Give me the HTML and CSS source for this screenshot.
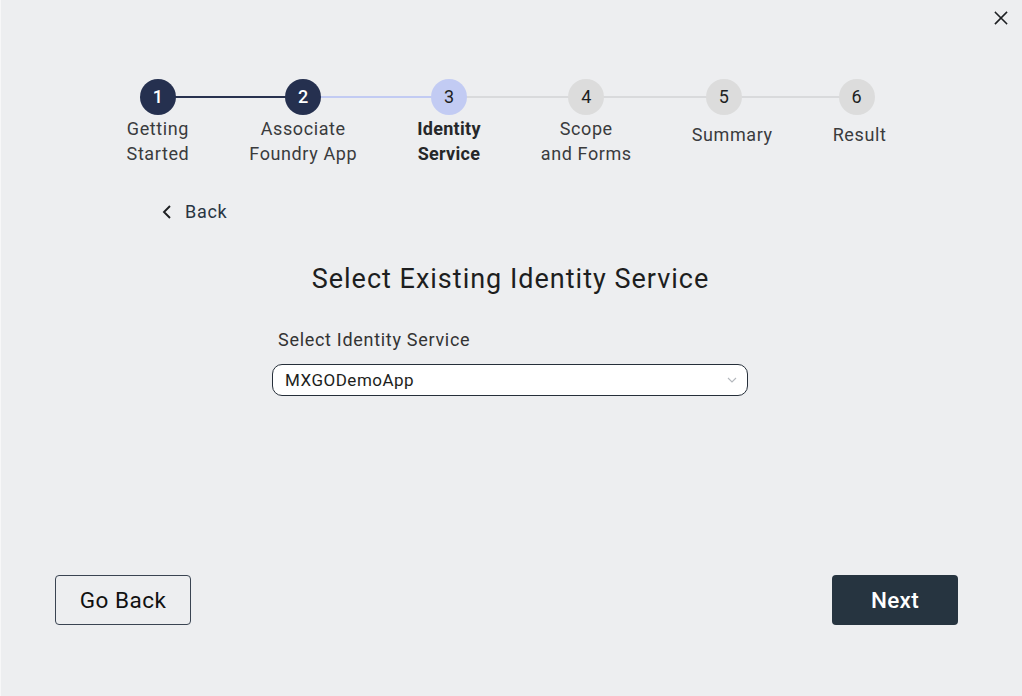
FILE: index.html
```html
<!DOCTYPE html>
<html lang="en">
<head>
<meta charset="utf-8">
<title>Select Existing Identity Service</title>
<link rel="stylesheet" href="styles.css">
</head>
<body>
<div class="page">
  <button class="close" aria-label="Close">
    <svg width="14" height="14" viewBox="0 0 14 14"><path d="M1.5 1.5 L12.5 12.5 M12.5 1.5 L1.5 12.5" stroke="#1d1f22" stroke-width="1.6" fill="none" stroke-linecap="square"/></svg>
  </button>

  <ol class="stepper">
    <li class="step done l-none r-dark">
      <span class="dot">1</span>
      <span class="label">Getting<br>Started</span>
    </li>
    <li class="step done l-dark r-blue">
      <span class="dot">2</span>
      <span class="label">Associate<br>Foundry App</span>
    </li>
    <li class="step current l-blue r-gray">
      <span class="dot">3</span>
      <span class="label">Identity<br>Service</span>
    </li>
    <li class="step todo l-gray r-gray">
      <span class="dot">4</span>
      <span class="label">Scope<br>and Forms</span>
    </li>
    <li class="step todo l-gray r-gray">
      <span class="dot shift-lg">5</span>
      <span class="label single">Summary</span>
    </li>
    <li class="step todo l-gray r-none">
      <span class="dot shift-sm">6</span>
      <span class="label single">Result</span>
    </li>
  </ol>

  <div class="back-row">
    <a class="back" href="#">
      <svg width="12" height="16" viewBox="0 0 12 16"><path d="M9 2 L3 8 L9 14" stroke="#1d1f22" stroke-width="1.9" fill="none"/></svg>
      <span>Back</span>
    </a>
  </div>

  <h1 class="title">Select Existing Identity Service</h1>

  <div class="form">
    <label class="field-label">Select Identity Service</label>
    <div class="select">
      <span class="value">MXGODemoApp</span>
      <svg width="10" height="6" viewBox="0 0 10 6"><path d="M1 1 L5 5 L9 1" stroke="#b4b8bd" stroke-width="1.1" fill="none"/></svg>
    </div>
  </div>

  <div class="footer">
    <button class="btn btn-outline">Go Back</button>
    <button class="btn btn-primary">Next</button>
  </div>
</div>
</body>
</html>
```
FILE: styles.css
```css
* { box-sizing: border-box; }
html, body { margin: 0; padding: 0; }
body {
  background: #edeef0;
  font-family: Roboto, "Noto Sans", sans-serif;
  color: #333;
}
.page {
  position: relative;
  width: 1022px;
  height: 696px;
  display: flex;
  flex-direction: column;
  border-left: 1px solid #f7f7f8;
}
.close {
  position: absolute;
  top: 11px;
  right: 14px;
  width: 14px;
  height: 14px;
  padding: 0;
  border: 0;
  background: none;
  display: flex;
}
.stepper {
  list-style: none;
  margin: 79px 0 0 0;
  padding: 0 10px 0 0;
  display: flex;
  justify-content: center;
  gap: 60px;
}
.step {
  position: relative;
  display: flex;
  flex-direction: column;
  align-items: center;
}
.step::before, .step::after {
  content: "";
  position: absolute;
  top: 17px;
  height: 2px;
  z-index: 0;
}
.step::before { left: -30px; right: 50%; }
.step::after { left: 50%; right: -30px; }
.l-dark::before, .r-dark::after { background: #28324f; }
.l-blue::before, .r-blue::after { background: #c2cbf3; }
.l-gray::before, .r-gray::after { background: #d9dadc; }
.l-none::before, .r-none::after { display: none; }
.dot {
  position: relative;
  z-index: 1;
  width: 36px;
  height: 36px;
  border-radius: 50%;
  display: flex;
  align-items: center;
  justify-content: center;
  font-size: 18px;
  line-height: 1;
}
.dot.shift-lg { margin-right: 17px; }
.dot.shift-sm { margin-right: 6px; }
.done .dot { background: #25304f; color: #fff; font-weight: 500; }
.current .dot { background: #c2cbf3; color: #1e1f22; }
.todo .dot { background: #dcdcdc; color: #1e1f22; }
.label {
  margin-top: 1px;
  font-size: 18px;
  letter-spacing: 0.6px;
  line-height: 25px;
  text-align: center;
  color: #3a3b3d;
  white-space: nowrap;
}
.label.single { margin-top: 7px; }
.current .label { font-weight: 700; color: #262729; letter-spacing: 0.3px; }
.back-row {
  margin-top: 34px;
  padding-left: 160px;
}
.back {
  display: inline-flex;
  align-items: center;
  gap: 12px;
  text-decoration: none;
  color: #283543;
  font-size: 18px;
  letter-spacing: 0.7px;
  line-height: 24px;
}
.title {
  margin: 39px 0 0 0;
  padding-right: 2px;
  text-align: center;
  font-size: 27px;
  letter-spacing: 1px;
  line-height: 32px;
  font-weight: 400;
  color: #1d1e20;
}
.form {
  margin: 33px 0 0 271px;
  width: 476px;
}
.field-label {
  display: block;
  padding-left: 6px;
  font-size: 18px;
  letter-spacing: 0.7px;
  line-height: 24px;
  color: #333;
}
.select {
  margin-top: 12px;
  height: 32px;
  border: 1px solid #262f3a;
  border-radius: 10px;
  background: #fff;
  display: flex;
  align-items: center;
  justify-content: space-between;
  padding: 0 10px 0 12px;
}
.value {
  font-size: 17px;
  letter-spacing: 0.5px;
  color: #1d1e20;
}
.footer {
  margin-top: auto;
  margin-bottom: 71px;
  display: flex;
  justify-content: space-between;
  padding: 0 64px 0 54px;
}
.btn {
  height: 50px;
  border-radius: 4px;
  font-family: Roboto, "Noto Sans", sans-serif;
  font-size: 22.5px;
  letter-spacing: 0.5px;
  cursor: pointer;
}
.btn-outline {
  width: 136px;
  background: transparent;
  border: 1px solid #3a4452;
  color: #111;
}
.btn-primary {
  width: 126px;
  background: #263440;
  border: 0;
  color: #fff;
  font-weight: 500;
  letter-spacing: 0.3px;
}
```
